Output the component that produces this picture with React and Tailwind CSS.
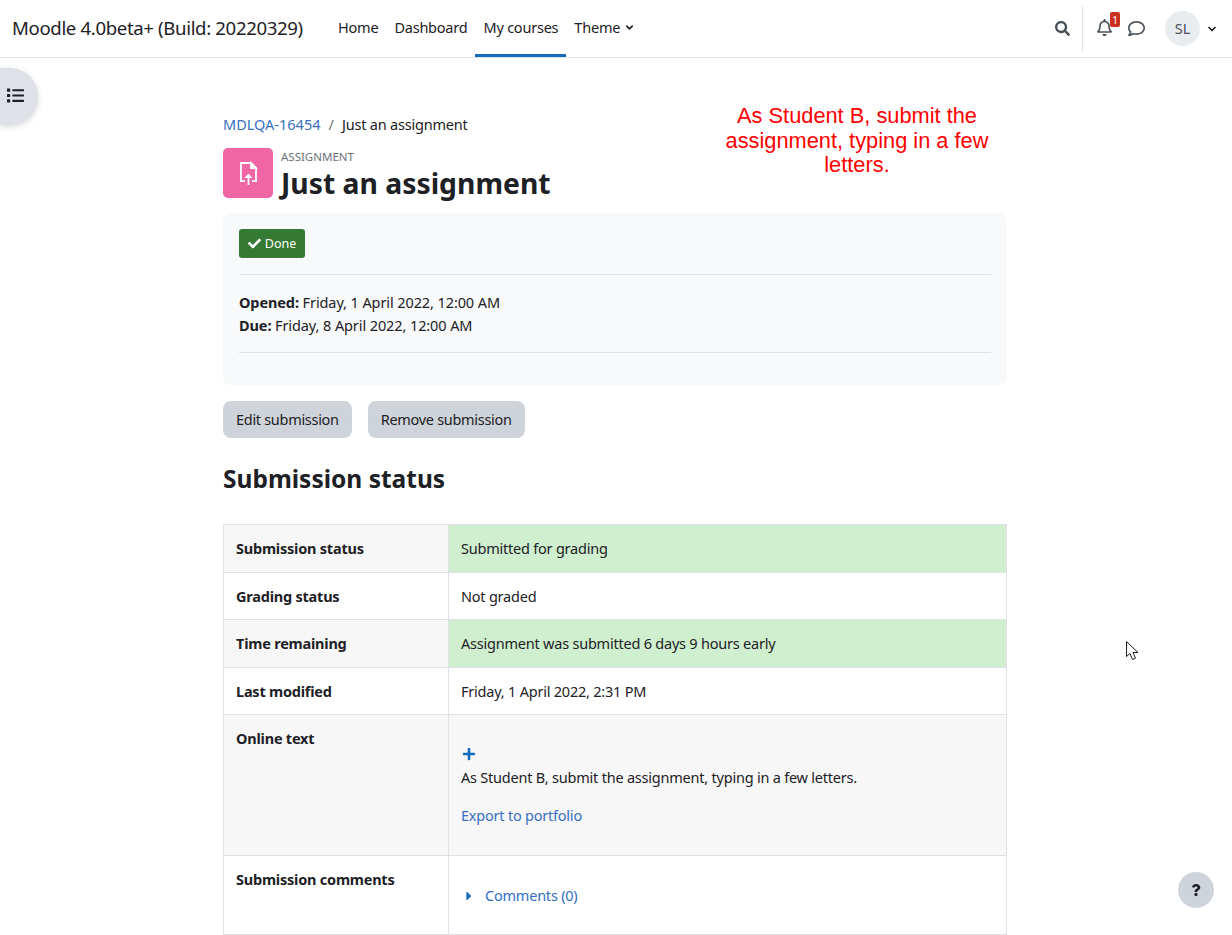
import React from "react";
import { FaCheck, FaPlus, FaCaretRight, FaQuestion, FaList, FaSearch, FaRegBell, FaRegComment } from "react-icons/fa";
import { ChevronDown } from "lucide-react";

const font = "font-['Noto_Sans','Open_Sans',sans-serif]";

const rows = [
  { label: "Submission status", value: "Submitted for grading", cell: "bg-[#cfefcf]", head: "bg-[#f7f7f7]", h: "h-[48px]", pad: "" },
  { label: "Grading status", value: "Not graded", cell: "bg-white", head: "bg-white", h: "h-[47px]", pad: "pt-[2px]" },
  { label: "Time remaining", value: "Assignment was submitted 6 days 9 hours early", cell: "bg-[#cfefcf]", head: "bg-[#f7f7f7]", h: "h-[48px]", pad: "" },
  { label: "Last modified", value: "Friday, 1 April 2022, 2:31 PM", cell: "bg-white", head: "bg-white", h: "h-[47px]", pad: "pt-[2px]" },
];

const AssignIcon = () => (
  <svg width="24" height="24" viewBox="0 0 24 24" fill="none" stroke="#fff" strokeWidth="1.800">
    <path d="M9 20.100H5V2h10l5 5v13.100h-4" />
    <path d="M15 2v5h5z" fill="#fff" />
    <path d="M12.500 24V15" />
    <path d="M8.500 17l4-4.500 4 4.500z" fill="#fff" stroke="none" />
  </svg>
);

const App = () => {
  return (
    <div className={`relative h-[935px] overflow-hidden bg-white text-[15px] leading-[22.500px] text-[#1d2125] ${font}`}>
      {/* Navbar */}
      <nav className="flex h-[58px] items-center border-b border-[#dee2e6] bg-white pl-3 pr-[14px]">
        <div className="w-[318px] pb-[1px] text-[18.600px] tracking-[-0.35px] text-[#1d2125]">Moodle 4.0beta+ (Build: 20220329)</div>
        <div className="flex h-full items-center text-[14.500px] tracking-[-0.22px]">
          <a className="flex h-full items-center px-2 pb-[2px]">Home</a>
          <a className="flex h-full items-center px-2 pb-[2px]">Dashboard</a>
          <a className="flex h-full items-center border-b-[3px] border-[#0f6cbf] px-2 pt-[1px]">My courses</a>
          <a className="flex h-full items-center gap-1 px-2 pb-[2px]">
            Theme <ChevronDown size={11} strokeWidth={3.500} />
          </a>
        </div>
        <div className="ml-auto flex h-full items-center">
          <FaSearch size={15} className="mr-[12px] text-[#495057]" />
          <div className="mr-[13px] h-[46px] w-px bg-[#dee2e6]" />
          <div className="relative mr-[15px] pb-[2px]">
            <FaRegBell size={17} className="text-[#495057]" />
            <span className="absolute -top-[7px] left-[14px] flex h-[15px] w-[10px] items-center justify-center rounded-[2px] bg-[#ca3120] text-[10px] leading-none text-white">1</span>
          </div>
          <FaRegComment size={17} className="mr-[20px] text-[#495057]" />
          <div className="mr-[6px] flex h-[35px] w-[35px] items-center justify-center rounded-full bg-[#e9ecef] text-[14.500px] text-[#495057]">SL</div>
          <ChevronDown size={12} strokeWidth={3.500} />
        </div>
      </nav>

      {/* Main column */}
      <main className="ml-[223px] w-[784px]">
        <div className="flex items-center pt-[55px] text-[14.500px]">
          <a className="text-[#3a6fbf]">MDLQA-16454</a>
          <span className="px-2 text-[#6a737b]">/</span>
          <span className="tracking-[-0.2px]">Just an assignment</span>
        </div>

        <div className="mt-[12px] flex h-[50px] items-start gap-2">
          <div className="flex h-[50px] w-[50px] items-center justify-center rounded-[5px] bg-[#f065a4]">
            <AssignIcon />
          </div>
          <div className="pt-[2px]">
            <div className="text-[11.500px] leading-[14px] text-[#6a737b]">ASSIGNMENT</div>
            <h1 className="mt-[3px] text-[28.300px] font-bold leading-[33px]">Just an assignment</h1>
          </div>
        </div>

        <div className="mt-[15px] h-[172px] rounded-lg bg-[#f8f9fa] px-4 pt-4">
          <div className="flex h-[29px] w-[66px] items-center justify-center gap-1 rounded-[3px] bg-[#357a32] pt-[3px] text-[12.500px] text-white">
            <FaCheck size={13} className="-mt-[2px]" /> Done
          </div>
          <div className="mt-4 border-t border-[#dee2e6] pt-[16px] text-[14.500px] leading-[23px] tracking-[-0.1px]">
            <div><strong className="font-bold">Opened:</strong> Friday, 1 April 2022, 12:00 AM</div>
            <div><strong className="font-bold">Due:</strong> Friday, 8 April 2022, 12:00 AM</div>
          </div>
          <div className="mt-[15px] border-t border-[#dee2e6]" />
        </div>

        <div className="mt-4 flex gap-4 text-[14.500px] tracking-[-0.3px]">
          <button className="h-[37px] rounded-lg bg-[#ced4da] px-[13px]">Edit submission</button>
          <button className="h-[37px] rounded-lg bg-[#ced4da] px-[13px]">Remove submission</button>
        </div>

        <h2 className="mt-[24px] text-[24.500px] font-bold leading-[33px]">Submission status</h2>

        <table className="mt-[29px] w-full table-fixed border-collapse text-[14.500px] tracking-[-0.22px]">
          <tbody>
            {rows.map((r) => (
              <tr key={r.label} className={r.h}>
                <th className={`w-[225px] border border-[#dee2e6] px-3 text-left font-bold ${r.head} ${r.pad}`}>{r.label}</th>
                <td className={`border border-[#dee2e6] px-3 ${r.cell} ${r.pad}`}>{r.value}</td>
              </tr>
            ))}
            <tr className="h-[141px]">
              <th className="border border-[#dee2e6] bg-[#f7f7f7] px-3 pt-[12px] text-left align-top font-bold">Online text</th>
              <td className="border border-[#dee2e6] bg-[#f7f7f7] px-3 align-top">
                <FaPlus size={14} className="ml-[1px] mt-[32px] text-[#0f6cbf]" />
                <div className="mt-[5px]">As Student B, submit the assignment, typing in a few letters.</div>
                <a className="mt-[16px] block text-[#3a6fbf]">Export to portfolio</a>
              </td>
            </tr>
            <tr className="h-[79px]">
              <th className="border border-[#dee2e6] bg-white px-3 pt-[12px] text-left align-top font-bold">Submission comments</th>
              <td className="border border-[#dee2e6] bg-white px-3 pt-[2px]">
                <div className="flex items-center text-[#0f6cbf]">
                  <FaCaretRight size={14} className="ml-[1px] mr-[9px]" />
                  <a className="text-[#2f6fc0]">Comments (0)</a>
                </div>
              </td>
            </tr>
          </tbody>
        </table>
      </main>

      {/* Drawer toggle */}
      <button className="absolute left-0 top-[68px] flex h-[57px] w-[38px] items-center rounded-r-[28px] bg-[#dee2e6] pb-[2px] pl-[7px] shadow-[0_2px_6px_rgba(0,0,0,0.15)]">
        <FaList size={17} className="text-[#1d2125]" />
      </button>

      {/* Annotation added on the screenshot */}
      <div className="absolute left-[707px] top-[104px] w-[300px] text-center font-['Liberation_Sans',sans-serif] text-[21.800px] leading-[24.500px] text-[#ff0000]">
        As Student B, submit the assignment, typing in a few letters.
      </div>

      {/* Mouse pointer */}
      <svg className="absolute left-[1125px] top-[640px]" width="15" height="22" viewBox="0 0 15 22" fill="#fff" stroke="#1d2125" strokeWidth="1">
        <path d="M1.500 1.500v15l3.500-3 2.500 6 3-1.300-2.500-5.700h5z" />
      </svg>

      {/* Help button */}
      <button className="absolute left-[1178px] top-[872px] flex h-9 w-9 items-center justify-center rounded-full bg-[#ced4da] text-[#1d2125]">
        <FaQuestion size={12} />
      </button>
    </div>
  );
};

export default App;
